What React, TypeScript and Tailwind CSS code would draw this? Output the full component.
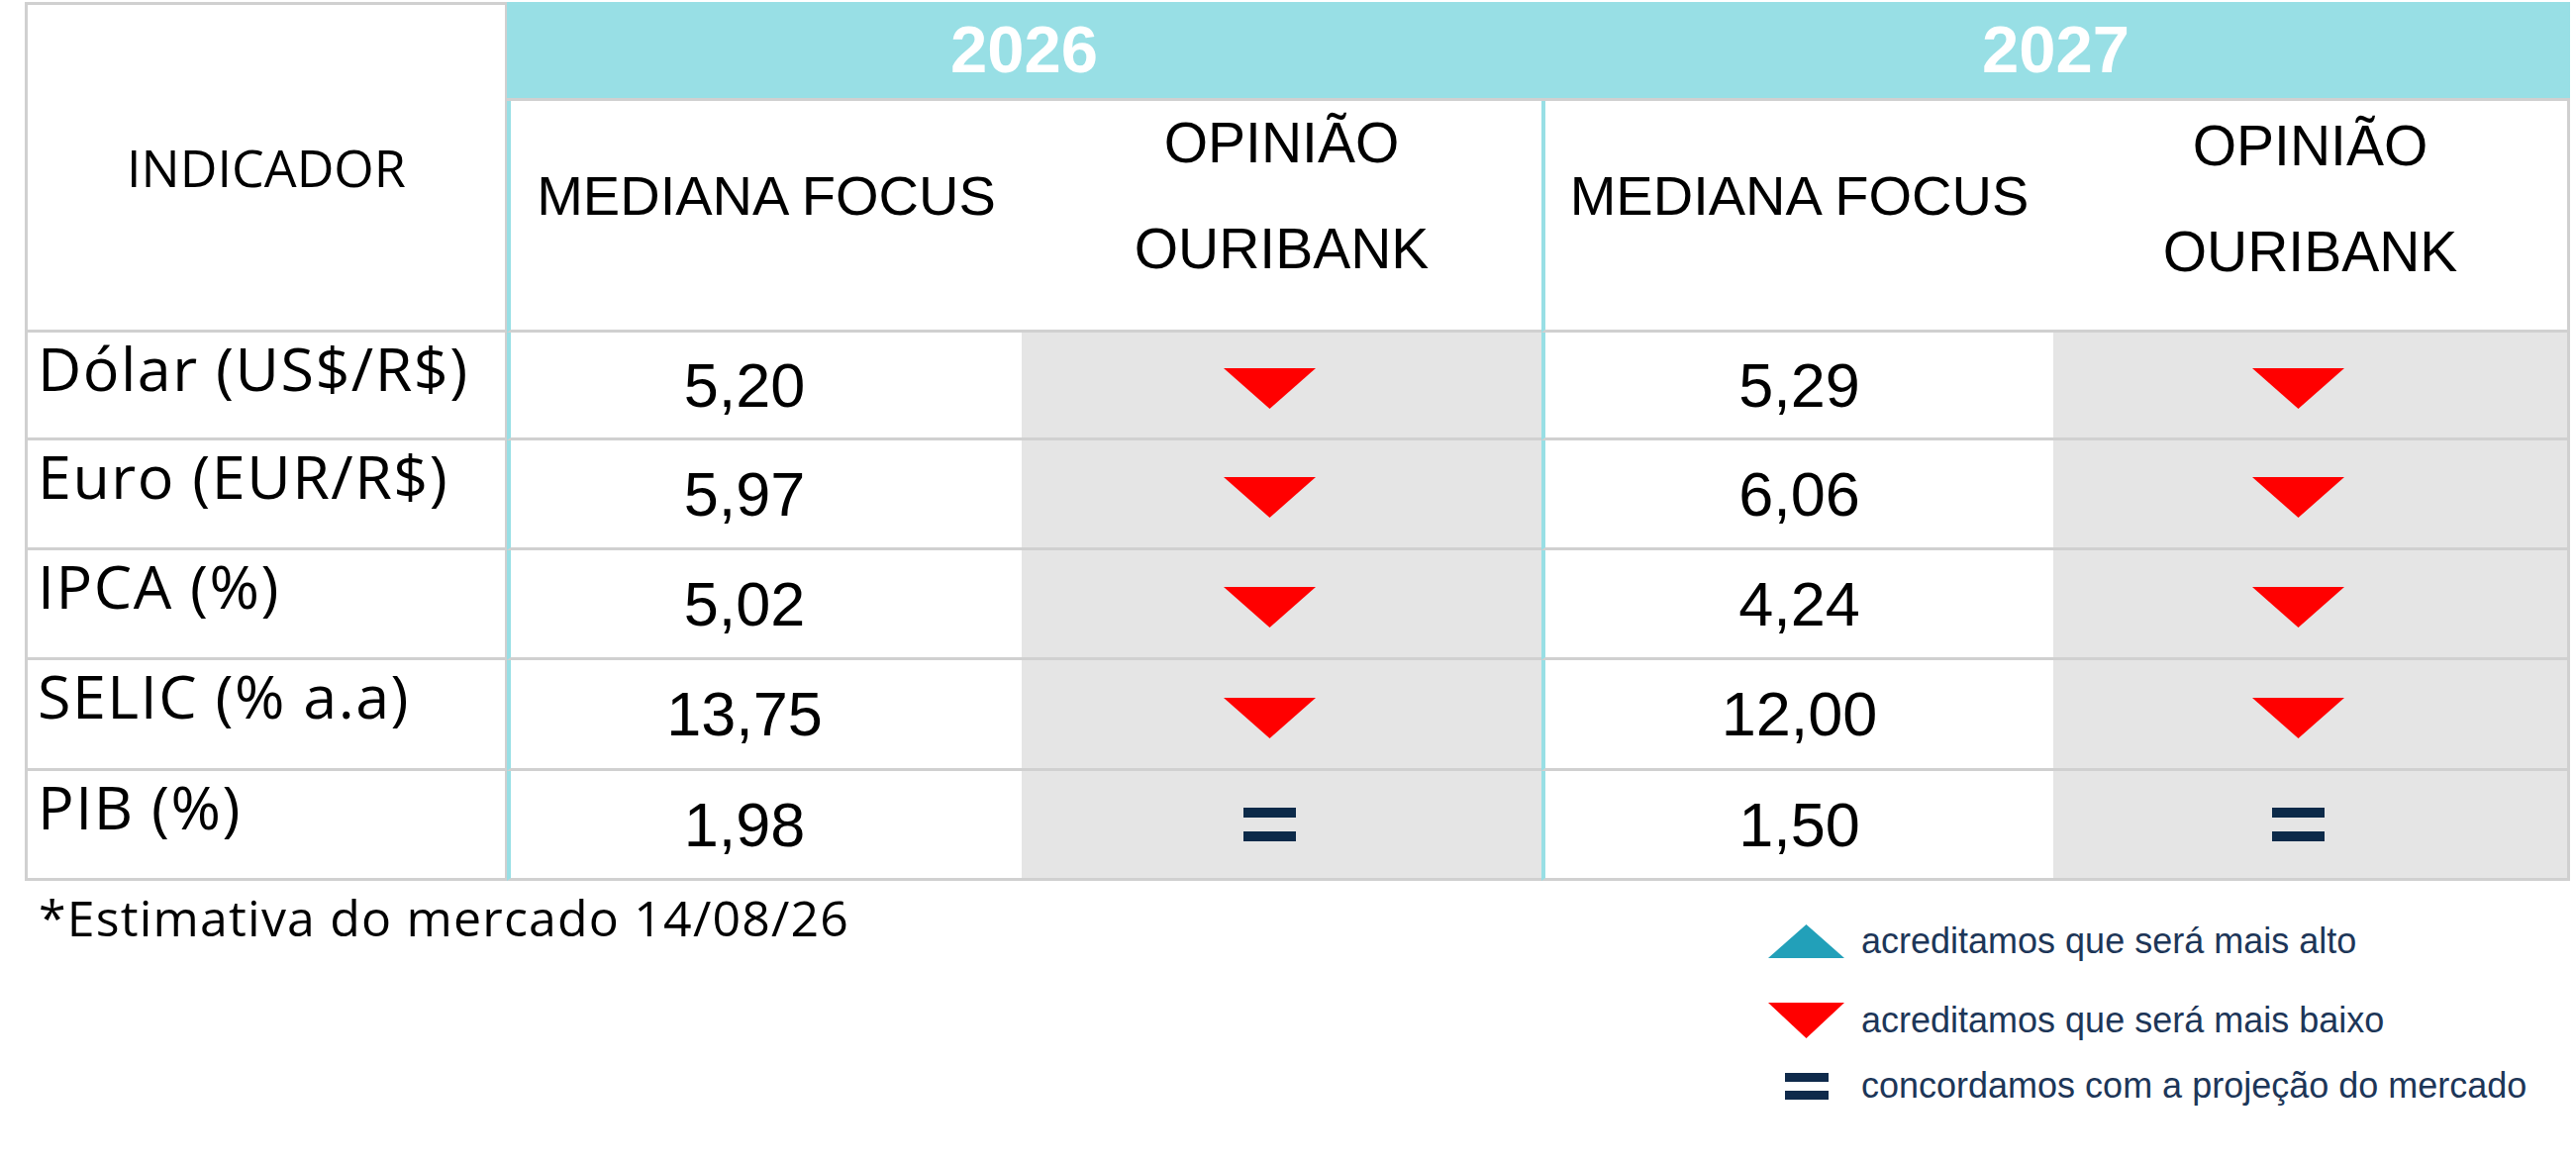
import React from "react";

type Opinion = "down" | "up" | "equal";

const rows: { label: string; v26: string; o26: Opinion; v27: string; o27: Opinion }[] = [
  { label: "Dólar (US$/R$)", v26: "5,20", o26: "down", v27: "5,29", o27: "down" },
  { label: "Euro (EUR/R$)", v26: "5,97", o26: "down", v27: "6,06", o27: "down" },
  { label: "IPCA (%)", v26: "5,02", o26: "down", v27: "4,24", o27: "down" },
  { label: "SELIC (% a.a)", v26: "13,75", o26: "down", v27: "12,00", o27: "down" },
  { label: "PIB (%)", v26: "1,98", o26: "equal", v27: "1,50", o27: "equal" },
];

function DownTriangle({ w, h }: { w: number; h: number }) {
  return (
    <svg width={w} height={h} viewBox={`0 0 ${w} ${h}`}>
      <polygon points={`0,0 ${w},0 ${w / 2},${h}`} fill="#ff0000" />
    </svg>
  );
}

function UpTriangle({ w, h }: { w: number; h: number }) {
  return (
    <svg width={w} height={h} viewBox={`0 0 ${w} ${h}`}>
      <polygon points={`${w / 2},0 ${w},${h} 0,${h}`} fill="#22a0b9" />
    </svg>
  );
}

function TableEquals() {
  return (
    <div className="flex flex-col gap-[14px] w-[53px]">
      <div className="h-[10px] bg-[#0c2a49]" />
      <div className="h-[10px] bg-[#0c2a49]" />
    </div>
  );
}

function OpinionIcon({ kind }: { kind: Opinion }) {
  if (kind === "equal") return <TableEquals />;
  if (kind === "up")
    return (
      <div className="mt-[7px]">
        <UpTriangle w={93} h={41} />
      </div>
    );
  return (
    <div className="mt-[7px] flex">
      <DownTriangle w={93} h={41} />
    </div>
  );
}

export default function App() {
  return (
    <div className="w-[2602px] h-[1174px] bg-white pl-[25px] pt-[2px]">
      <div className="grid w-[2571px] grid-cols-[487px_520px_525px_517px_522px] grid-rows-[100px_234px_109px_111px_111px_112px_111px]">
        {/* header */}
        <div className="row-span-2 flex items-center justify-center border-l-[3px] border-t-[3px] border-b-[3px] border-r-[2px] border-[#d0d0d0] font-['Open_Sans',sans-serif] text-[52px] text-black">
          INDICADOR
        </div>
        <div className="col-span-2 flex items-center justify-center bg-[#98dfe5] border-b-[3px] border-[#d0d0d0] font-['Liberation_Sans',Arial,sans-serif] font-bold text-[67px] text-white">
          2026
        </div>
        <div className="col-span-2 flex items-center justify-center bg-[#98dfe5] border-b-[3px] border-[#d0d0d0] font-['Liberation_Sans',Arial,sans-serif] font-bold text-[67px] text-white">
          2027
        </div>

        {[0, 1].map((i) => (
          <React.Fragment key={i}>
            <div className="flex items-center justify-center pb-[40px] border-l-4 border-l-[#98dfe5] border-b-[3px] border-b-[#d0d0d0] font-['Liberation_Sans',Arial,sans-serif] text-[56px] text-black">
              MEDIANA FOCUS
            </div>
            <div
              className={
                i === 1
                  ? "flex items-center justify-center pb-[34px] border-b-[3px] border-r-[3px] border-[#d0d0d0] font-['Liberation_Sans',Arial,sans-serif] text-[57px] leading-[107px] text-black text-center"
                  : "flex items-center justify-center pb-[40px] border-b-[3px] border-[#d0d0d0] font-['Liberation_Sans',Arial,sans-serif] text-[57px] leading-[107px] text-black text-center"
              }
            >
              <div>
                OPINIÃO
                <br />
                OURIBANK
              </div>
            </div>
          </React.Fragment>
        ))}

        {/* data rows */}
        {rows.map((r) => (
          <React.Fragment key={r.label}>
            <div className="pl-[10px] pt-[5px] border-l-[3px] border-r-[2px] border-b-[3px] border-[#d0d0d0] font-['Open_Sans',sans-serif] text-[61px] leading-none tracking-[1.5px] text-black">
              {r.label}
            </div>
            <div className="flex items-center justify-center pr-[44px] border-l-4 border-l-[#98dfe5] border-b-[3px] border-b-[#d0d0d0] font-['Liberation_Sans',Arial,sans-serif] text-[63px] text-black">
              {r.v26}
            </div>
            <div className="flex items-center justify-center pr-[24px] bg-[#e5e5e5] border-b-[3px] border-[#d0d0d0]">
              <OpinionIcon kind={r.o26} />
            </div>
            <div className="flex items-center justify-center border-l-4 border-l-[#98dfe5] border-b-[3px] border-b-[#d0d0d0] font-['Liberation_Sans',Arial,sans-serif] text-[63px] text-black">
              {r.v27}
            </div>
            <div className="flex items-center justify-center pr-[24px] bg-[#e5e5e5] border-b-[3px] border-r-[3px] border-[#d0d0d0]">
              <OpinionIcon kind={r.o27} />
            </div>
          </React.Fragment>
        ))}
      </div>

      {/* footer */}
      <div className="flex">
        <div className="w-[1761px] pl-[14px] font-['Open_Sans',sans-serif] text-[50px] tracking-[1.2px] text-black">
          *Estimativa do mercado 14/08/26
        </div>
        <div className="flex flex-col pt-[41px] font-['Liberation_Sans',Arial,sans-serif] text-[36px] text-[#1d3658]">
          <div className="flex items-center h-[40px]">
            <div className="w-[77px] flex justify-center">
              <UpTriangle w={77} h={34} />
            </div>
            <span className="ml-[17px]">acreditamos que será mais alto</span>
          </div>
          <div className="flex items-center h-[40px] mt-[40px]">
            <div className="w-[77px] flex justify-center">
              <DownTriangle w={77} h={36} />
            </div>
            <span className="ml-[17px]">acreditamos que será mais baixo</span>
          </div>
          <div className="flex items-center h-[40px] mt-[26px]">
            <div className="w-[77px] flex justify-center">
              <div className="flex flex-col gap-[9px] w-[44px]">
                <div className="h-[9px] bg-[#0f2a4b]" />
                <div className="h-[9px] bg-[#0f2a4b]" />
              </div>
            </div>
            <span className="ml-[17px]">concordamos com a projeção do mercado</span>
          </div>
        </div>
      </div>
    </div>
  );
}
